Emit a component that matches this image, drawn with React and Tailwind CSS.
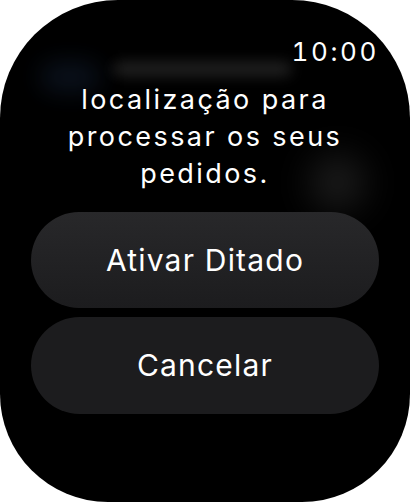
export default function App() {
  return (
    <div className="h-[502px] w-[410px] overflow-hidden bg-white" style={{ fontFamily: "Inter, 'Noto Sans', sans-serif" }}>
      <div className="relative flex h-full w-full flex-col overflow-hidden rounded-t-[118px] rounded-b-[108px] bg-black">
        {/* blurred content scrolled under the clock */}
        <div className="absolute left-[112px] top-[62px] h-[14px] w-[180px] rounded-full bg-[#3a3a3a] opacity-60 blur-[7px]" />
        <div className="absolute left-[40px] top-[62px] h-[30px] w-[60px] rounded-full bg-[#0d1624] opacity-80 blur-[12px]" />
        <div className="absolute left-[310px] top-[155px] h-[55px] w-[55px] rounded-full bg-[#3a3a3a] opacity-50 blur-[18px]" />

        <div className="relative flex justify-end pr-[31px] pt-[36px]">
          <span className="text-[26px] leading-[32px] tracking-[0.1em] tabular-nums text-white">10:00</span>
        </div>

        <p className="relative mt-[13px] px-[36px] text-center text-[27px] leading-[37px] tracking-[0.09em] text-white">
          localização para processar os seus pedidos.
        </p>

        <div className="relative mt-[20px] flex flex-col gap-[9px] px-[31px]">
          <button className="h-[96px] rounded-full bg-gradient-to-b from-[#28282a] to-[#1c1c1e] text-[30px] tracking-[0.04em] text-white">
            Ativar Ditado
          </button>
          <button className="h-[97px] rounded-full bg-[#1c1c1e] text-[30px] tracking-[0.04em] text-white">
            Cancelar
          </button>
        </div>
      </div>
    </div>
  );
}
